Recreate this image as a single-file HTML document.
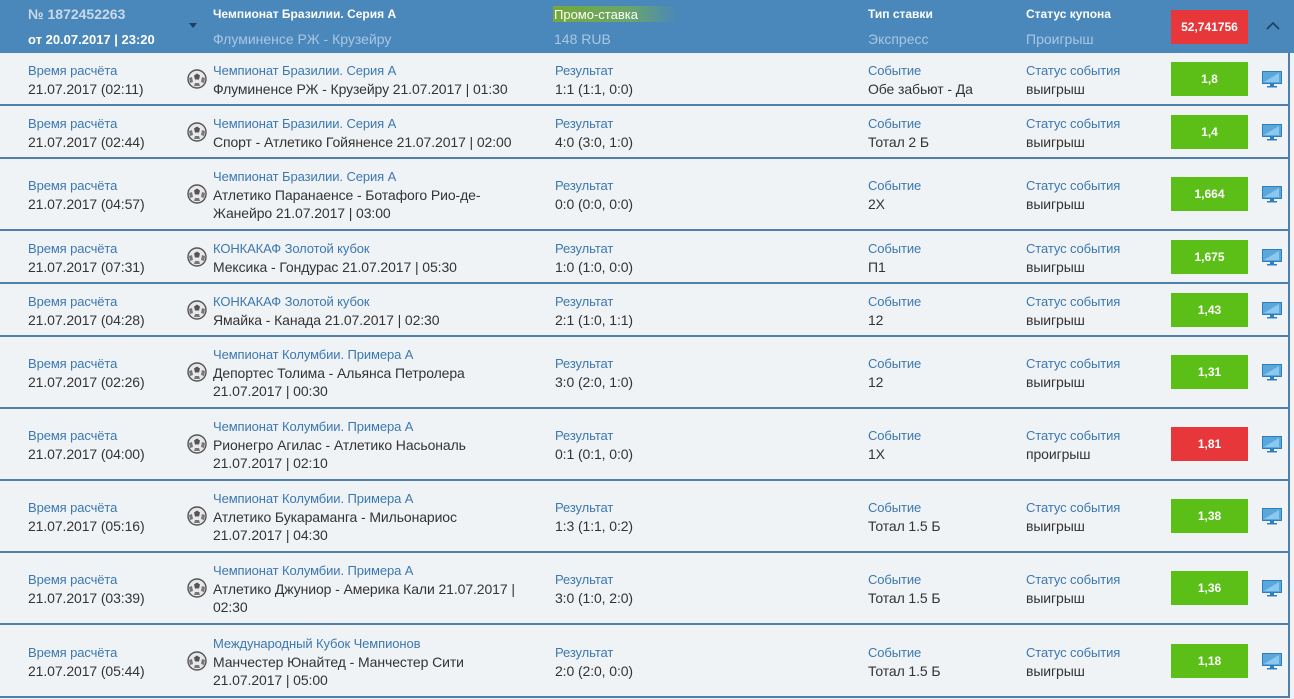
<!DOCTYPE html>
<html><head><meta charset="utf-8"><style>
*{margin:0;padding:0;box-sizing:border-box}
body{width:1294px;height:699px;overflow:hidden;background:#f0f3f6;font-family:"Liberation Sans",sans-serif;position:relative}
.hdr{position:absolute;left:0;top:0;width:1294px;height:53px;background:#4a87bb}
.a{position:absolute;white-space:nowrap}
.row{position:absolute;left:0;width:1290px;border-bottom:2px solid #4f80ad;border-right:2px solid #4f80ad}
.c{position:absolute;top:1px;bottom:-1px;display:flex;flex-direction:column;justify-content:center;font-size:14px;line-height:18px;color:#333;letter-spacing:-0.1px}
.l{font-size:13px;color:#3b78b0}
.ball{position:absolute;left:187px;top:50%;margin-top:-10px;width:20px;height:20px}
.bd{position:absolute;left:1171px;top:50%;margin-top:-17px;width:77px;height:34px;background:#5cbf17;color:#fff;font-weight:bold;font-size:12px;display:flex;align-items:center;justify-content:center}
.mon{position:absolute;left:1262px;top:50%;margin-top:-8px}
</style></head><body>
<div class="hdr">
<div class="a" style="left:28px;top:6px;color:#c8d9ea;font-weight:bold;font-size:14px">№ 1872452263</div>
<div class="a" style="left:28px;top:32px;color:#fff;font-weight:bold;font-size:13px">от 20.07.2017 | 23:20</div>
<div class="a" style="left:189px;top:23px;width:0;height:0;border-left:4px solid transparent;border-right:4px solid transparent;border-top:5px solid #1e3f60"></div>
<div class="a" style="left:213px;top:7px;color:#fff;font-weight:bold;font-size:12px">Чемпионат Бразилии. Серия А</div>
<div class="a" style="left:213px;top:31px;color:#a9c7e3;font-size:14px">Флуминенсе РЖ - Крузейру</div>
<div class="a" style="left:553px;top:6px;width:125px;height:16px;background:linear-gradient(90deg,#74a83b,#6aa66a 60%,rgba(74,135,187,0))"></div>
<div class="a" style="left:554px;top:7px;color:#fff;font-size:13px">Промо-ставка</div>
<div class="a" style="left:554px;top:31px;color:#a9c7e3;font-size:14px">148 RUB</div>
<div class="a" style="left:868px;top:7px;color:#fff;font-weight:bold;font-size:12px">Тип ставки</div>
<div class="a" style="left:868px;top:31px;color:#a9c7e3;font-size:14px">Экспресс</div>
<div class="a" style="left:1026px;top:7px;color:#fff;font-weight:bold;font-size:12px">Статус купона</div>
<div class="a" style="left:1026px;top:31px;color:#a9c7e3;font-size:14px">Проигрыш</div>
<div class="a" style="left:1171px;top:10px;width:77px;height:34px;background:#e8373a;color:#fff;font-weight:bold;font-size:12px;display:flex;align-items:center;justify-content:center">52,741756</div>
<svg class="a" style="left:1266px;top:21px" width="14" height="9"><path d="M1 8L7 2L13 8" stroke="#1e3f60" stroke-width="1.6" fill="none"/></svg>
</div>
<div id="rows"></div>
<script>
var R=[
[53,53,"21.07.2017 (02:11)","Чемпионат Бразилии. Серия А",["Флуминенсе РЖ - Крузейру 21.07.2017 | 01:30"],"1:1 (1:1, 0:0)","Обе забьют - Да","выигрыш","1,8"],
[106,53,"21.07.2017 (02:44)","Чемпионат Бразилии. Серия А",["Спорт - Атлетико Гойяненсе 21.07.2017 | 02:00"],"4:0 (3:0, 1:0)","Тотал 2 Б","выигрыш","1,4"],
[159,72,"21.07.2017 (04:57)","Чемпионат Бразилии. Серия А",["Атлетико Паранаенсе - Ботафого Рио-де-","Жанейро 21.07.2017 | 03:00"],"0:0 (0:0, 0:0)","2Х","выигрыш","1,664"],
[231,53,"21.07.2017 (07:31)","КОНКАКАФ Золотой кубок",["Мексика - Гондурас 21.07.2017 | 05:30"],"1:0 (1:0, 0:0)","П1","выигрыш","1,675"],
[284,53,"21.07.2017 (04:28)","КОНКАКАФ Золотой кубок",["Ямайка - Канада 21.07.2017 | 02:30"],"2:1 (1:0, 1:1)","12","выигрыш","1,43"],
[337,72,"21.07.2017 (02:26)","Чемпионат Колумбии. Примера А",["Депортес Толима - Альянса Петролера","21.07.2017 | 00:30"],"3:0 (2:0, 1:0)","12","выигрыш","1,31"],
[409,72,"21.07.2017 (04:00)","Чемпионат Колумбии. Примера А",["Рионегро Агилас - Атлетико Насьональ","21.07.2017 | 02:10"],"0:1 (0:1, 0:0)","1Х","проигрыш","1,81"],
[481,72,"21.07.2017 (05:16)","Чемпионат Колумбии. Примера А",["Атлетико Букараманга - Мильонариос","21.07.2017 | 04:30"],"1:3 (1:1, 0:2)","Тотал 1.5 Б","выигрыш","1,38"],
[553,72,"21.07.2017 (03:39)","Чемпионат Колумбии. Примера А",["Атлетико Джуниор - Америка Кали 21.07.2017 |","02:30"],"3:0 (1:0, 2:0)","Тотал 1.5 Б","выигрыш","1,36"],
[625,73,"21.07.2017 (05:44)","Международный Кубок Чемпионов",["Манчестер Юнайтед - Манчестер Сити","21.07.2017 | 05:00"],"2:0 (2:0, 0:0)","Тотал 1.5 Б","выигрыш","1,18"]];
var h="";
var ball='<svg class="ball" viewBox="0 0 20 20"><circle cx="10" cy="10" r="9" fill="#e8e8e8" stroke="#555" stroke-width="1.4"/><path d="M7 6.5l3-2 3 2-1 4h-4z" fill="#555"/><path d="M2 9l3-1 1 5-3 1zM18 9l-3-1-1 5 3 1zM7 17l1-3h4l1 3z" fill="#777"/></svg>';
var mon='<svg class="mon" width="20" height="17" viewBox="0 0 20 17"><rect x="0.5" y="0.5" width="19" height="12" fill="#5aa7dc" stroke="#2f7fc0"/><path d="M2 11L17 2v9z" fill="#8cc8ee"/><rect x="8" y="13" width="4" height="2" fill="#2f7fc0"/><rect x="5" y="15" width="10" height="1.5" fill="#2f7fc0"/></svg>';
R.forEach(function(r){
h+='<div class="row" style="top:'+r[0]+'px;height:'+r[1]+'px">'+
'<div class="c" style="left:28px"><div class="l">Время расчёта</div><div>'+r[2]+'</div></div>'+ball+
'<div class="c" style="left:213px"><div class="l">'+r[3]+'</div><div>'+r[4].join('</div><div>')+'</div></div>'+
'<div class="c" style="left:555px"><div class="l">Результат</div><div>'+r[5]+'</div></div>'+
'<div class="c" style="left:868px"><div class="l">Событие</div><div>'+r[6]+'</div></div>'+
'<div class="c" style="left:1026px"><div class="l">Статус события</div><div>'+r[7]+'</div></div>'+
'<div class="bd" style="'+(r[7]=="проигрыш"?"background:#e8373a":"")+'">'+r[8]+'</div>'+mon+'</div>';});
document.getElementById("rows").innerHTML=h;
</script>
</body></html>
